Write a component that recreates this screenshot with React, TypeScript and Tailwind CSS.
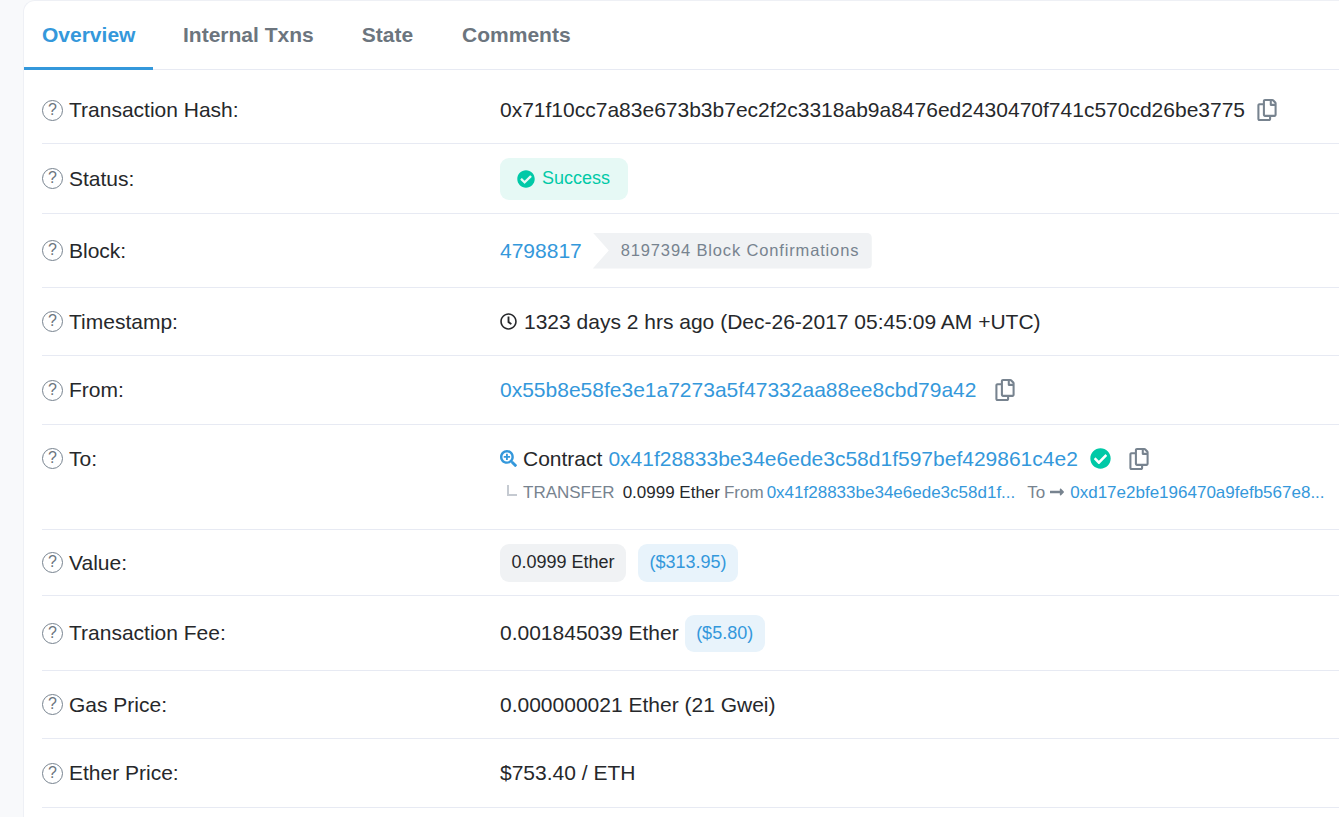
import React from 'react';
import { FaRegCopy, FaCheckCircle, FaRegClock, FaSearchPlus, FaLongArrowAltRight } from 'react-icons/fa';

const tabs = ['Internal Txns', 'State', 'Comments'];

const Help: React.FC = () => (
  <span className="w-[21px] h-[21px] shrink-0 rounded-full border-[1.5px] border-[#77838f] text-[#6c757e] text-[16px] leading-[18px] text-center mr-[6px]">?</span>
);

const Link: React.FC<{ children: React.ReactNode; className?: string }> = ({ children, className = '' }) => (
  <a className={`text-[#3498db] ${className}`}>{children}</a>
);

const Copy: React.FC<{ className?: string }> = ({ className = '' }) => (
  <FaRegCopy className={`text-[#77838f] text-[22px] ${className}`} />
);

const Row: React.FC<{ label: string; height: string; top?: boolean; className?: string; children: React.ReactNode }> = ({ label, height, top, className = '', children }) => (
  <div className={`flex border-b border-[#e7eaf3] ${height} ${top ? 'items-start pt-[18px]' : 'items-center'} ${className}`}>
    <div className="w-[458px] shrink-0 flex items-center">
      <Help />
      <span>{label}</span>
    </div>
    <div className="flex-1 min-w-0">{children}</div>
  </div>
);

export default function App() {
  return (
    <div className="h-[817px] overflow-hidden bg-[#f8f9fb] pl-[23px] font-['Liberation_Sans',Arial,sans-serif] text-[21px] text-[#26282b]">
      <div className="bg-white rounded-tl-[12px] border-l border-t border-[#eef0f5] h-[840px]">
        <div className="flex border-b border-[#e7eaf3] h-[69px] font-bold text-[#6c757e]">
          <div className="w-[129px] h-[69px] border-b-[3px] border-[#3498db] text-[#3498db] pl-[18px] pt-[18px]">Overview</div>
          {tabs.map((t, i) => (
            <div key={t} className={`pt-[18px] ${i === 0 ? 'ml-[30px]' : i === 1 ? 'ml-[48px]' : 'ml-[49px]'}`}>{t}</div>
          ))}
        </div>
        <div className="pl-[18px]">
          <Row label="Transaction Hash:" height="h-[74px]" className="pt-[7px]">
            <div className="flex items-center">
              <span>0x71f10cc7a83e673b3b7ec2f2c3318ab9a8476ed2430470f741c570cd26be3775</span>
              <Copy className="ml-[11px]" />
            </div>
          </Row>
          <Row label="Status:" height="h-[70px]">
            <span className="inline-flex items-center h-[42px] w-[128px] rounded-[9px] bg-[#e6f9f5] text-[#00c9a7] text-[18px] pl-[17px]">
              <FaCheckCircle className="text-[18px] mr-[7px]" />
              Success
            </span>
          </Row>
          <Row label="Block:" height="h-[74px]">
            <div className="flex items-center">
              <Link>4798817</Link>
              <span className="ml-[11px] h-[36px] w-[279px] flex items-center pl-[28px] bg-[#f0f2f4] text-[#77838f] text-[16.5px] tracking-[0.85px] rounded-r-[5px] [clip-path:polygon(0_0,100%_0,100%_100%,0_100%,16px_50%)]">
                8197394 Block Confirmations
              </span>
            </div>
          </Row>
          <Row label="Timestamp:" height="h-[68px]">
            <div className="flex items-center">
              <FaRegClock className="text-[17px] mr-[7px]" />
              <span>1323 days 2 hrs ago (Dec-26-2017 05:45:09 AM +UTC)</span>
            </div>
          </Row>
          <Row label="From:" height="h-[69px]">
            <div className="flex items-center">
              <Link>0x55b8e58fe3e1a7273a5f47332aa88ee8cbd79a42</Link>
              <Copy className="ml-[18px]" />
            </div>
          </Row>
          <Row label="To:" height="h-[105px]" top>
            <div className="flex items-center">
              <FaSearchPlus className="text-[#3498db] text-[17px] mr-[6px]" />
              <span>Contract</span>
              <Link className="ml-[6px]">0x41f28833be34e6ede3c58d1f597bef429861c4e2</Link>
              <FaCheckCircle className="text-[#00c9a7] text-[21px] ml-[12px]" />
              <Copy className="ml-[17px]" />
            </div>
            <div className="flex items-center text-[17px] mt-[5px] whitespace-nowrap text-[#77838f]">
              <span className="w-[10px] h-[11px] border-l-2 border-b-2 border-[#c5cad1] ml-[7px] mr-[6px] mb-[3px]" />
              <span>TRANSFER</span>
              <span className="text-[#26282b] ml-[8px]">0.0999 Ether</span>
              <span className="ml-[4px]">From</span>
              <Link className="ml-[3px]">0x41f28833be34e6ede3c58d1f...</Link>
              <span className="ml-[12px]">To</span>
              <FaLongArrowAltRight className="ml-[4px] mr-[5px] text-[16px]" />
              <Link>0xd17e2bfe196470a9fefb567e8...</Link>
            </div>
          </Row>
          <Row label="Value:" height="h-[66px]">
            <div className="flex items-center">
              <span className="h-[38px] w-[126px] flex items-center justify-center rounded-[9px] bg-[#f0f2f4] text-[18px]">0.0999 Ether</span>
              <span className="h-[38px] w-[100px] ml-[12px] flex items-center justify-center rounded-[9px] bg-[#e8f3fb] text-[#3498db] text-[18px]">($313.95)</span>
            </div>
          </Row>
          <Row label="Transaction Fee:" height="h-[75px]">
            <div className="flex items-center">
              <span>0.001845039 Ether</span>
              <span className="h-[37px] w-[80px] ml-[6px] flex items-center justify-center rounded-[9px] bg-[#e8f3fb] text-[#3498db] text-[18px]">($5.80)</span>
            </div>
          </Row>
          <Row label="Gas Price:" height="h-[68px]">
            <span>0.000000021 Ether (21 Gwei)</span>
          </Row>
          <Row label="Ether Price:" height="h-[69px]">
            <span>$753.40 / ETH</span>
          </Row>
        </div>
      </div>
    </div>
  );
}
